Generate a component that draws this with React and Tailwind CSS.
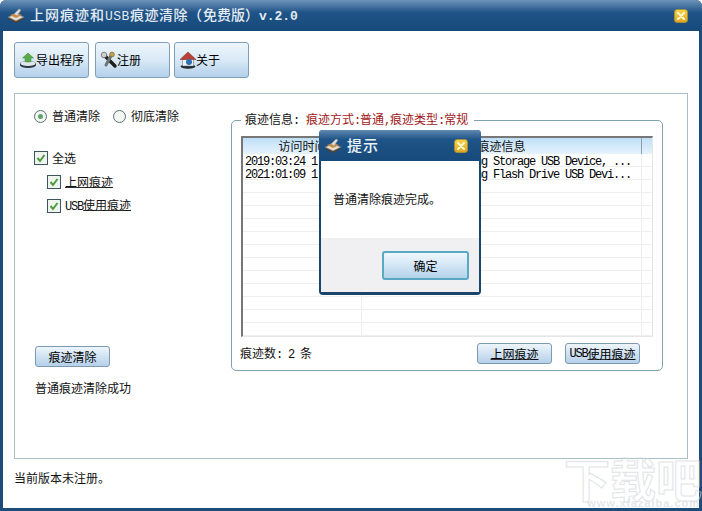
import React from 'react';

const Mono = ({ children }) => (
  <span className="whitespace-pre font-['Liberation_Mono','Noto_Sans_CJK_SC',monospace] tracking-[-1.2px]">{children}</span>
);

const AppIcon = () => (
  <svg width="18" height="16" viewBox="0 0 18 16" className="shrink-0">
    <path d="M1 11l8-3 8 3-8 4z" fill="#4d4136" />
    <path d="M1 9l8-3 8 3-8 4z" fill="#e4dfd3" stroke="#7d7467" strokeWidth="0.6" />
    <path d="M3 7l6-2 6 2-6 3z" fill="#c98a45" />
    <path d="M7 6l5-5 2 1-4 6z" fill="#dcdcdc" stroke="#8a8a8a" strokeWidth="0.5" />
  </svg>
);

const CloseBtn = () => (
  <div className="flex h-[14px] w-[14px] items-center justify-center rounded-[3px] border border-[#a98f3a] bg-gradient-to-b from-[#f4d44a] to-[#e0a520]">
    <svg width="10" height="10" viewBox="0 0 10 10">
      <path d="M2 2l6 6M8 2l-6 6" stroke="#fff6c8" strokeWidth="2.2" strokeLinecap="round" />
    </svg>
  </div>
);

const ExportIcon = () => (
  <svg width="18" height="18" viewBox="0 0 18 18" className="shrink-0">
    <path d="M1 13c0-2 4-3 8-3s8 1 8 3v1c0 2-4 3-8 3s-8-1-8-3z" fill="#2f3a44" />
    <ellipse cx="9" cy="12.5" rx="7.5" ry="2.6" fill="#dfe7ec" />
    <path d="M9 2l5.5 5H12v3.5c-2 .8-4 .8-6 0V7H3.500z" fill="#57ac48" stroke="#3a8434" strokeWidth="0.5" />
  </svg>
);

const KeyIcon = () => (
  <svg width="18" height="18" viewBox="0 0 18 18" className="shrink-0">
    <path d="M4 4l11 11" stroke="#1f1f1f" strokeWidth="3.4" strokeLinecap="round" />
    <path d="M12 3L6 14" stroke="#6e7378" strokeWidth="3" strokeLinecap="round" />
    <circle cx="12" cy="3.500" r="2.400" fill="#c7a24a" stroke="#6d5a26" strokeWidth="0.6" />
    <circle cx="4" cy="4" r="2.800" fill="#cfcfcf" stroke="#444" strokeWidth="0.6" />
  </svg>
);

const HomeIcon = () => (
  <svg width="18" height="18" viewBox="0 0 18 18" className="shrink-0">
    <ellipse cx="9" cy="15.500" rx="7.500" ry="2.200" fill="#20262c" />
    <path d="M3.500 8h11v7h-11z" fill="#eef1f4" stroke="#6a7a88" strokeWidth="0.6" />
    <path d="M9 1L1 8.500h16z" fill="#b93f38" stroke="#7d2720" strokeWidth="0.5" />
    <circle cx="10" cy="11" r="3" fill="#2f6fb4" />
  </svg>
);

const ToolBtn = ({ icon, label }) => (
  <button className="flex h-[36px] w-[75px] items-center rounded-[3px] border border-[#7f9fb5] bg-gradient-to-b from-[#eef6fc] via-[#d9e9f6] to-[#b3d0ea] pl-[4px] text-[12px] text-black">
    {icon}
    <span className="ml-[-1px]">{label}</span>
  </button>
);

const SmallBtn = ({ children }) => (
  <button className="flex h-[21px] w-[75px] items-center justify-center rounded-[3px] border border-[#7b9bb3] bg-gradient-to-b from-[#eef5fb] to-[#b5d0e9] text-[12px] text-black">
    {children}
  </button>
);

const Radio = ({ on }) => (
  <span className="flex h-[13px] w-[13px] items-center justify-center rounded-full border border-[#5f6f70] bg-[#f4f6f4]">
    {on && <span className="h-[5px] w-[5px] rounded-full bg-[#5fa468]" />}
  </span>
);

const Check = () => (
  <span className="flex h-[14px] w-[14px] shrink-0 items-center justify-center border border-[#3e5560] bg-[#eef4ee]">
    <svg width="10" height="10" viewBox="0 0 10 10">
      <path d="M1.500 5l2.500 3 4.500-6" fill="none" stroke="#4d9a3f" strokeWidth="2" />
    </svg>
  </span>
);

const Under = ({ children }) => (
  <span className="underline decoration-[#333] underline-offset-0">{children}</span>
);

const rows = [
  ['2019:03:24 1', 'ng Storage USB Device, ...'],
  ['2021:01:09 1', 'ng Flash Drive USB Devi...'],
  ...Array.from({ length: 12 }, () => ['', '']),
];

export default function App() {
  return (
    <div className="relative flex h-[511px] w-[702px] flex-col overflow-hidden rounded-t-[6px] bg-[#1d4c7a] px-[3px] pb-[3px] font-['Noto_Sans_CJK_SC',sans-serif] text-[12px] text-[#111]">
      {/* title bar */}
      <div className="-mx-[3px] flex h-[31px] shrink-0 items-center bg-gradient-to-b from-[#6d93b8] via-[#1f5488] via-40% to-[#174a7b] pl-[7px] pr-[14px] font-medium text-[#e4ebf2]">
        <AppIcon />
        <span className="ml-[5px] whitespace-pre text-[14px] tracking-[1px]">
          上网痕迹和<span className="font-['Liberation_Mono',monospace] text-[13px] tracking-[0.5px]">USB</span>
          <span className="tracking-[0.5px]">痕迹清除</span>
          <span>{'\uFF08'}</span>
          <span className="tracking-[0px]">免费版{'\uFF09'}</span>
          <span className="font-['Liberation_Mono',monospace] text-[13px] font-bold tracking-[0px]">v.2.0</span>
        </span>
        <div className="ml-auto">
          <CloseBtn />
        </div>
      </div>

      <div className="flex flex-1 flex-col bg-white px-[11px] pt-[11px]">
        {/* toolbar */}
        <div className="flex">
          <ToolBtn icon={<ExportIcon />} label="导出程序" />
          <div className="ml-[6px]">
            <ToolBtn icon={<KeyIcon />} label="注册" />
          </div>
          <div className="ml-[4px]">
            <ToolBtn icon={<HomeIcon />} label="关于" />
          </div>
        </div>

        {/* main group */}
        <div className="mt-[15px] flex h-[366px] border border-[#a9c0c9]">
          <div className="w-[216px] shrink-0 pl-[19px] pt-[14px]">
            <div className="flex h-[16px] items-center">
              <Radio on />
              <span className="ml-[5px]">普通清除</span>
              <span className="ml-[13px]">
                <Radio />
              </span>
              <span className="ml-[5px]">彻底清除</span>
            </div>
            <div className="mt-[26px] flex h-[16px] items-center">
              <Check />
              <span className="ml-[4px]">全选</span>
            </div>
            <div className="ml-[13px] mt-[8px] flex h-[16px] items-center">
              <Check />
              <span className="ml-[4px]">
                <Under>上网痕迹</Under>
              </span>
            </div>
            <div className="ml-[13px] mt-[8px] flex h-[16px] items-center">
              <Check />
              <span className="ml-[4px]">
                <Mono>USB</Mono>
                <Under>使用痕迹</Under>
              </span>
            </div>
            <div className="ml-[1px] mt-[132px]">
              <SmallBtn>痕迹清除</SmallBtn>
            </div>
            <div className="ml-[1px] mt-[13px] h-[16px] leading-[16px]">普通痕迹清除成功</div>
          </div>

          {/* trace info group */}
          <div className="relative mt-[26px] h-[251px] w-[432px] shrink-0 rounded-[5px] border border-[#7fa3ad] pl-[9px] pt-[15px]">
            <div className="absolute -top-[9px] left-[9px] flex h-[16px] items-center whitespace-pre bg-white pl-[4px] pr-[6px]">
              <span>痕迹信息<Mono>:</Mono></span>
              <span className="ml-[7px] text-[#a01818]">
                痕迹方式<Mono>:</Mono>普通<Mono>,</Mono>痕迹类型<Mono>:</Mono>常规
              </span>
            </div>

            <div className="h-[201px] w-[412px] overflow-hidden border-b border-l-2 border-r border-t-2 border-b-[#e6e6e6] border-l-[#777] border-r-[#e6e6e6] border-t-[#777]">
              <div className="flex h-[16px] items-center bg-gradient-to-b from-[#bfdff7] to-[#e6f3fd] leading-[16px]">
                <div className="w-[119px] shrink-0 text-center">访问时间</div>
                <div className="w-[280px] shrink-0 border-r border-[#8ba0ad] text-center">痕迹信息</div>
              </div>
              {rows.map((r, i) => (
                <div key={i} className="flex h-[13px] border-b border-[#eeeeee] font-['Liberation_Mono',monospace] text-[12px] leading-[16px] tracking-[-1.2px] text-black">
                  <div className="w-[119px] shrink-0 border-r border-[#eeeeee] pl-[2px]">{r[0]}</div>
                  <div className="w-[280px] shrink-0 whitespace-pre border-r border-[#eeeeee] pl-[113px]">{r[1]}</div>
                </div>
              ))}
            </div>

            <div className="mt-[6px] flex items-center">
              <span className="-ml-[1px] whitespace-pre">
                痕迹数<Mono>: 2 </Mono>条
              </span>
              <div className="ml-auto mr-[22px] flex gap-[13px]">
                <SmallBtn>
                  <Under>上网痕迹</Under>
                </SmallBtn>
                <SmallBtn>
                  <Mono>USB</Mono>
                  <Under>使用痕迹</Under>
                </SmallBtn>
              </div>
            </div>
          </div>
        </div>

        <div className="mt-[11px] h-[16px] leading-[16px]">当前版本未注册。</div>
      </div>

      {/* dialog */}
      <div className="absolute left-[319px] top-[130px] flex h-[165px] w-[162px] flex-col overflow-hidden rounded-[4px] bg-[#1b4669] px-[2px] pb-[3px]">
        <div className="-mx-[2px] flex h-[31px] shrink-0 items-center bg-gradient-to-b from-[#5f8ab0] via-[#1f5488] via-30% to-[#174a7b] pl-[5px] pr-[13px] text-[#eef3f8]">
          <AppIcon />
          <span className="ml-[5px] text-[15px] font-medium tracking-[1px]">提示</span>
          <div className="ml-auto">
            <CloseBtn />
          </div>
        </div>
        <div className="h-[77px] shrink-0 bg-white pl-[12px] pt-[30px] leading-[16px]">普通清除痕迹完成。</div>
        <div className="flex flex-1 justify-end bg-[#f0eff1] pr-[10px] pt-[13px]">
          <button className="flex h-[29px] w-[87px] items-center justify-center rounded-[3px] border-2 border-[#5aa9c4] bg-gradient-to-b from-[#f0f8fd] to-[#b4d3ec] text-[12px] text-black">
            确定
          </button>
        </div>
      </div>

      {/* watermark */}
      <div className="pointer-events-none absolute bottom-[11px] right-0 w-[140px] text-right text-[46px] font-bold leading-[46px] text-transparent opacity-70 [-webkit-text-stroke:1px_#d3d9dc]">
        下载吧
      </div>
      <div className="pointer-events-none absolute bottom-[3px] right-[2px] font-['Liberation_Sans',sans-serif] text-[11px] font-bold leading-[9px] tracking-[1px] text-[#d9dddf] opacity-70">
        www.xiazaiba.com
      </div>
    </div>
  );
}
